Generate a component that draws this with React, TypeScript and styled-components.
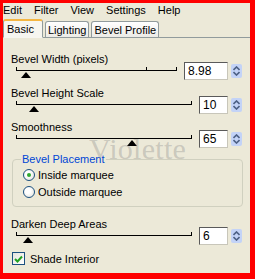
import React from 'react';
import styled, { createGlobalStyle } from 'styled-components';

const GlobalStyle = createGlobalStyle`
  html, body { margin: 0; padding: 0; background: #fff; }
  body { font-family: "Liberation Sans", Arial, sans-serif; font-size: 11px; color: #000; }
`;

const Frame = styled.div`
  position: relative;
  width: 255px;
  height: 279px;
  box-sizing: border-box;
  border-style: solid;
  border-color: #f00;
  border-width: 3px 5px 6px 3px;
  background: #ece9d8;
  display: flex;
  flex-direction: column;
  overflow: hidden;
`;

const MenuBar = styled.div`
  display: flex;
  gap: 12px;
  height: 15px;
  align-items: center;
  font-size: 11px;
`;

const MenuItem = styled.span`
  line-height: 13px;
`;

const TabStrip = styled.div`
  display: flex;
  align-items: flex-end;
  gap: 2px;
  height: 19px;
  border-bottom: 1px solid #919b9c;
`;

const Tab = styled.div<{ $active?: boolean }>`
  box-sizing: border-box;
  height: ${p => (p.$active ? 19 : 16)}px;
  margin-bottom: ${p => (p.$active ? -1 : 0)}px;
  padding: ${p => (p.$active ? '0 8px 0 3px' : '0 2px')};
  border: 1px solid #919b9c;
  border-bottom: ${p => (p.$active ? '1px solid #f7f6f0' : '0')};
  border-top: ${p => (p.$active ? '2px solid #f5b642' : '1px solid #919b9c')};
  border-radius: 3px 3px 0 0;
  background: ${p => (p.$active ? '#f7f6f0' : 'linear-gradient(#ffffff, #ecebe6)')};
  font-size: 11px;
  line-height: 14px;
  white-space: nowrap;
  display: flex;
  align-items: center;
`;

const Panel = styled.div`
  flex: 1;
  display: flex;
  flex-direction: column;
  padding: 15px 8px 0 8px;
`;

const SliderRow = styled.div<{ $gap: number }>`
  display: flex;
  align-items: flex-end;
  margin-bottom: ${p => p.$gap}px;
`;

const LeftCol = styled.div`
  flex: 1;
  display: flex;
  flex-direction: column;
  margin-right: 7px;
`;

const Label = styled.div`
  font-size: 11px;
  line-height: 13px;
  height: 13px;
`;

const Track = styled.div`
  position: relative;
  height: 12px;
  margin-left: 5px;
`;

const Line = styled.div`
  position: absolute;
  left: 0;
  right: 0;
  top: 4px;
  height: 1px;
  background: #000;
`;

const Tick = styled.div`
  position: absolute;
  top: 1px;
  width: 1px;
  height: 3px;
  background: #000;
`;

const Thumb = styled.div`
  position: absolute;
  top: 6px;
  width: 0;
  height: 0;
  margin-left: -5px;
  border-left: 5px solid transparent;
  border-right: 5px solid transparent;
  border-bottom: 6px solid #000;
`;

const NumBox = styled.div<{ $w: number }>`
  box-sizing: border-box;
  width: ${p => p.$w}px;
  height: 18px;
  margin-bottom: -2px;
  background: #fff;
  border: 1px solid;
  border-color: #5a5a5a #c8c6ba #c8c6ba #5a5a5a;
  padding: 1px 3px;
  font-size: 12px;
  line-height: 14px;
`;

const Spinner = styled.div`
  width: 11px;
  height: 14px;
  margin-left: 3px;
  border-radius: 2px;
  background: #c3d3f7;
  display: flex;
  align-items: center;
  justify-content: center;
`;

const GroupBox = styled.fieldset`
  margin: 0 -1px 11px 1px;
  padding: 2px 0 0 10px;
  border: 1px solid #d0d0bf;
  border-radius: 4px;
  height: 54px;
  box-sizing: border-box;
  display: flex;
  flex-direction: column;
  gap: 4px;
  min-width: 0;
`;

const Legend = styled.legend`
  padding: 0 1px;
  margin-left: -2px;
  color: #0046d5;
  font-size: 11px;
  line-height: 13px;
`;

const OptionRow = styled.label`
  display: flex;
  align-items: center;
  gap: 3px;
  height: 13px;
  font-size: 11px;
`;

const RadioDot = styled.span<{ $on?: boolean }>`
  box-sizing: border-box;
  width: 12px;
  height: 12px;
  border-radius: 50%;
  border: 1px solid #1c5180;
  background: radial-gradient(circle at 40% 40%, #fff 30%, #dcdcd4 100%);
  display: flex;
  align-items: center;
  justify-content: center;
  &::after {
    content: '';
    display: ${p => (p.$on ? 'block' : 'none')};
    width: 4px;
    height: 4px;
    border-radius: 50%;
    background: #31a831;
  }
`;

const CheckRow = styled.label`
  display: flex;
  align-items: center;
  gap: 5px;
  margin-top: 9px;
  margin-left: 1px;
  font-size: 11px;
`;

const CheckBox = styled.span`
  box-sizing: border-box;
  width: 13px;
  height: 13px;
  border: 1px solid #1c5180;
  background: linear-gradient(135deg, #e4e3dc, #ffffff);
  display: flex;
  align-items: center;
  justify-content: center;
`;

const Watermark = styled.div`
  position: absolute;
  left: 86px;
  top: 140px;
  font-family: "Liberation Serif", "Times New Roman", serif;
  font-size: 30px;
  line-height: 12px;
  letter-spacing: 0.3px;
  color: rgba(120, 120, 120, 0.3);
  pointer-events: none;
`;

const Arrows = () => (
  <svg width="7" height="10" viewBox="0 0 7 10">
    <path d="M0.5 4 L3.5 1 L6.5 4" fill="none" stroke="#4d6185" strokeWidth="1.6" />
    <path d="M0.5 6 L3.5 9 L6.5 6" fill="none" stroke="#4d6185" strokeWidth="1.6" />
  </svg>
);

type SliderProps = {
  label: string;
  value: string;
  pos: number;
  boxW: number;
  ticks?: number[];
  gap: number;
};

const Slider = ({ label, value, pos, boxW, ticks = [], gap }: SliderProps) => (
  <SliderRow $gap={gap}>
    <LeftCol>
      <Label>{label}</Label>
      <Track>
        <Line />
        <Tick style={{ left: 0 }} />
        {ticks.map(t => (
          <Tick key={t} style={{ left: `${t}%` }} />
        ))}
        <Tick style={{ right: 0 }} />
        <Thumb style={{ left: `${pos}%` }} />
      </Track>
    </LeftCol>
    <NumBox $w={boxW}>{value}</NumBox>
    <Spinner>
      <Arrows />
    </Spinner>
  </SliderRow>
);

export default function App() {
  return (
    <>
      <GlobalStyle />
      <Frame>
        <MenuBar>
          <MenuItem>Edit</MenuItem>
          <MenuItem>Filter</MenuItem>
          <MenuItem>View</MenuItem>
          <MenuItem>Settings</MenuItem>
          <MenuItem>Help</MenuItem>
        </MenuBar>
        <TabStrip>
          <Tab $active>Basic</Tab>
          <Tab>Lighting</Tab>
          <Tab>Bevel Profile</Tab>
        </TabStrip>
        <Panel>
          <Slider label="Bevel Width (pixels)" value="8.98" pos={6.5} boxW={44} ticks={[80.7]} gap={9} />
          <Slider label="Bevel Height Scale" value="10" pos={10} boxW={29} gap={9} />
          <Slider label="Smoothness" value="65" pos={66} boxW={29} gap={7} />
          <GroupBox>
            <Legend>Bevel Placement</Legend>
            <OptionRow>
              <RadioDot $on />
              Inside marquee
            </OptionRow>
            <OptionRow>
              <RadioDot />
              Outside marquee
            </OptionRow>
          </GroupBox>
          <Slider label="Darken Deep Areas" value="6" pos={7} boxW={29} gap={0} />
          <CheckRow>
            <CheckBox>
              <svg width="9" height="8" viewBox="0 0 9 8">
                <path d="M1 4 L3.5 6.5 L8 1.5" fill="none" stroke="#21a121" strokeWidth="2" />
              </svg>
            </CheckBox>
            Shade Interior
          </CheckRow>
        </Panel>
        <Watermark>Violette</Watermark>
      </Frame>
    </>
  );
}
